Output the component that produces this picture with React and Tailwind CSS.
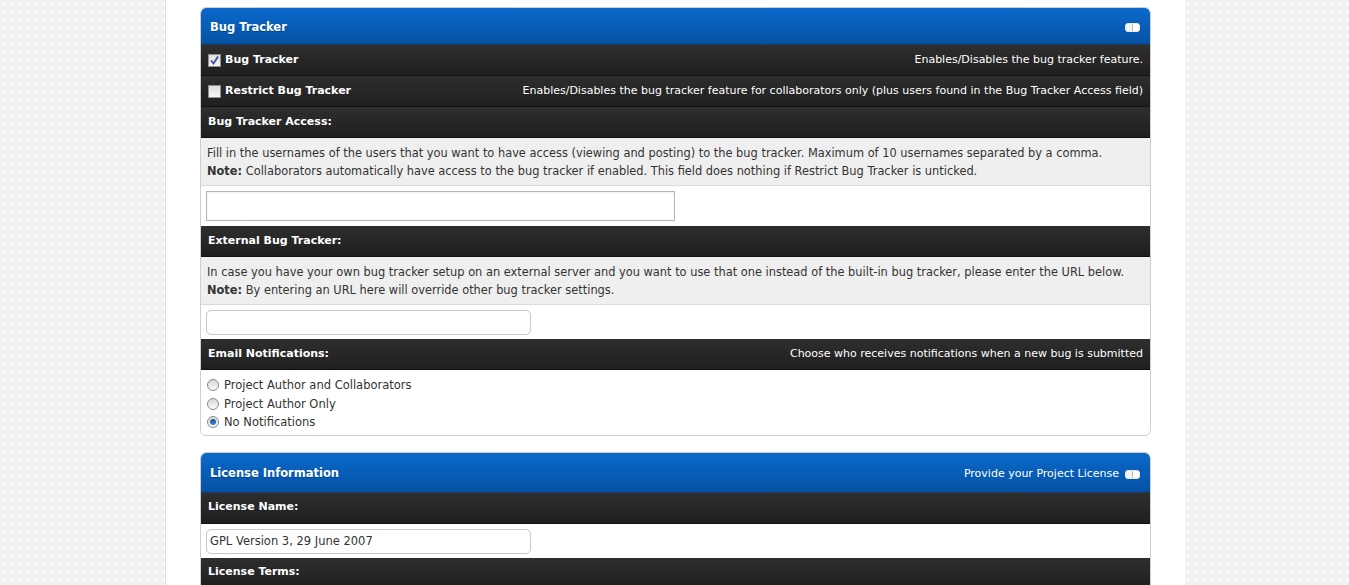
const font = { fontFamily: '"DejaVu Sans", Verdana, sans-serif' };

const Toggle = () => (
  <span className="inline-flex h-[9px] w-[15px] overflow-hidden rounded-[3px] border border-[#e8e8e8] bg-white">
    <span className="w-1/2 border-r border-[#b8b8b8] bg-[#f4f4f4]" />
    <span className="w-1/2 bg-white" />
  </span>
);

const PanelHeader = ({ title, right, tall }) => (
  <div
    className={
      (tall ? "h-[40px] pt-[4px] " : "h-[37px] pt-[3px] ") +
      "flex items-center justify-between rounded-t-[5px] border-b border-[#1c3a5e] bg-gradient-to-b from-[#0b69cb] to-[#0552a4] pl-[9px] pr-[10px] text-white"
    }
  >
    <span className="text-[11.5px] font-bold [text-shadow:0_1px_0_rgba(0,0,0,0.3)]">{title}</span>
    <span className="flex items-center gap-[6px] text-[11px]">
      {right}
      <Toggle />
    </span>
  </div>
);

const DarkRow = ({ children, right }) => (
  <div className="flex h-[31px] items-center justify-between border-b border-[#111] bg-gradient-to-b from-[#2e2e2e] to-[#1f1f1f] px-[7px] text-white">
    <span className="flex items-center gap-[4px] text-[11px] font-bold">{children}</span>
    {right && <span className="text-[11px]">{right}</span>}
  </div>
);

const Check = ({ checked }) => (
  <span className="flex h-[13px] w-[13px] items-center justify-center border border-[#8f8f8f] bg-gradient-to-b from-[#dcdcdc] to-[#f6f6f6]">
    {checked && (
      <svg width="11" height="11" viewBox="0 0 11 11">
        <path d="M2 5.5 L4.5 8.5 L9 1.5" stroke="#3c4fa8" strokeWidth="1.8" fill="none" />
      </svg>
    )}
  </span>
);

const Radio = ({ checked }) => (
  <span className="flex h-[12px] w-[12px] items-center justify-center rounded-full border border-[#8a8a8a] bg-gradient-to-b from-[#d8d8d8] to-[#fafafa]">
    {checked && <span className="h-[6px] w-[6px] rounded-full bg-gradient-to-b from-[#1d4f8c] to-[#2f8ee0]" />}
  </span>
);

const Desc = ({ children }) => (
  <div className="border-b border-[#dadada] bg-[#efefef] px-[6px] pt-[6px] pb-[5px] text-[11.4px] leading-[18px] text-[#333]">{children}</div>
);

export default function App() {
  return (
    <div
      style={font}
      className="h-[585px] overflow-hidden bg-[#f2f2f2] bg-[radial-gradient(circle,#fafafa_1.5px,transparent_2px)] bg-[length:8px_8px]"
    >
      <div className="ml-[165px] w-[1020px] border-l border-[#dedede] bg-white px-[34px] pt-[7px] pb-[20px]">
        <div className="overflow-hidden rounded-[6px] border border-[#cfcfcf]">
          <PanelHeader title="Bug Tracker" />
          <DarkRow right="Enables/Disables the bug tracker feature.">
            <Check checked /> Bug Tracker
          </DarkRow>
          <DarkRow right="Enables/Disables the bug tracker feature for collaborators only (plus users found in the Bug Tracker Access field)">
            <Check /> Restrict Bug Tracker
          </DarkRow>
          <DarkRow>Bug Tracker Access:</DarkRow>
          <Desc>
            Fill in the usernames of the users that you want to have access (viewing and posting) to the bug tracker. Maximum of 10 usernames separated by a comma.
            <br />
            <b>Note:</b> Collaborators automatically have access to the bug tracker if enabled. This field does nothing if Restrict Bug Tracker is unticked.
          </Desc>
          <div className="px-[5px] py-[5px]">
            <input className="block h-[30px] w-[469px] border border-[#b5b5b5] bg-white shadow-[inset_0_1px_2px_rgba(0,0,0,0.08)] outline-none" />
          </div>
          <DarkRow>External Bug Tracker:</DarkRow>
          <Desc>
            In case you have your own bug tracker setup on an external server and you want to use that one instead of the built-in bug tracker, please enter the URL below.
            <br />
            <b>Note:</b> By entering an URL here will override other bug tracker settings.
          </Desc>
          <div className="px-[5px] pt-[5px] pb-[4px]">
            <input className="block h-[25px] w-[325px] rounded-[5px] border border-[#c8c8c8] bg-white outline-none" />
          </div>
          <DarkRow right="Choose who receives notifications when a new bug is submitted">Email Notifications:</DarkRow>
          <div className="flex flex-col px-[6px] pt-[6px] pb-[3px] text-[11.5px] leading-[18.5px] text-[#333]">
            <label className="flex items-center gap-[5px]"><Radio /> Project Author and Collaborators</label>
            <label className="flex items-center gap-[5px]"><Radio /> Project Author Only</label>
            <label className="flex items-center gap-[5px]"><Radio checked /> No Notifications</label>
          </div>
        </div>

        <div className="mt-[16px] overflow-hidden rounded-[6px] border border-[#cfcfcf]">
          <PanelHeader tall title="License Information" right="Provide your Project License" />
          <DarkRow>License Name:</DarkRow>
          <div className="px-[5px] pt-[5px] pb-[4px]">
            <input
              defaultValue="GPL Version 3, 29 June 2007"
              style={font}
              className="block h-[25px] w-[325px] rounded-[5px] border border-[#c8c8c8] bg-white px-[3px] text-[11.5px] text-[#333] outline-none"
            />
          </div>
          <DarkRow>License Terms:</DarkRow>
          <div className="h-[60px]" />
        </div>
      </div>
    </div>
  );
}
